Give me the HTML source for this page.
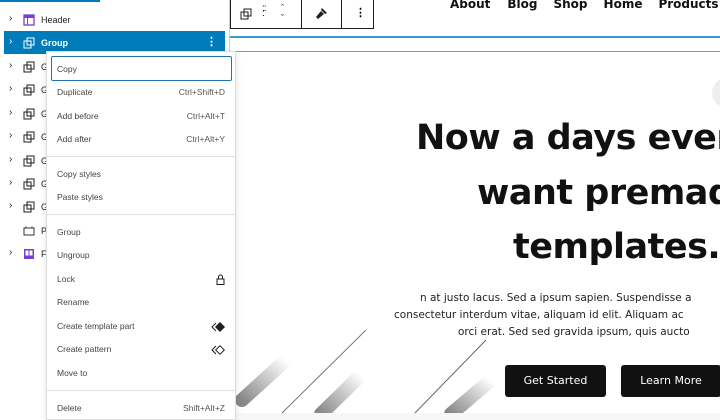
<!DOCTYPE html>
<html><head><style>
*{margin:0;padding:0;box-sizing:border-box}
body{width:720px;height:420px;overflow:hidden;background:#fff;font-family:"Liberation Sans",sans-serif;position:relative}
.abs{position:absolute}
.row{position:absolute;left:0;width:229px;height:23px;font-size:9px;color:#1e1e1e}
.row .chev{position:absolute;left:9px;top:5px;font-size:10px}
.row svg{position:absolute;left:23px;top:6px}
.row .t{position:absolute;left:41px;top:7px}
.menu{position:absolute;left:46px;top:51px;width:190px;height:369px;background:#fff;border:1px solid #ddd;box-shadow:0 2px 6px rgba(0,0,0,.12);font-size:8.5px;color:#444}
.mi{position:absolute;left:10px;right:10px;height:23px;line-height:23px}
.mi span{position:absolute;right:0;top:0;color:#555}
.sep{position:absolute;left:0;right:0;height:1px;background:#e0e0e0}
.poppins{font-family:"DejaVu Sans","Liberation Sans",sans-serif}
</style></head><body>
<div class="abs" style="left:0;top:0;width:100px;height:2px;background:#007cba"></div>
<div class="abs" style="left:229px;top:0;width:1px;height:420px;background:#ccc"></div>
<div class="row" style="top:8px"><span class="chev">›</span>
<svg width="12" height="12" viewBox="0 0 12 12"><rect x="1" y="1" width="10" height="10" fill="none" stroke="#7b3fd0" stroke-width="1.3"/><rect x="1" y="1" width="10" height="3" fill="#7b3fd0"/><line x1="4.5" y1="4" x2="4.5" y2="11" stroke="#7b3fd0"/></svg><span class="t">Header</span></div>
<div class="row" style="top:31px;left:4px;width:221px;background:#007cba;color:#fff"><span class="chev" style="left:5px">›</span>
<svg style="left:19px" width="12" height="12" viewBox="0 0 12 12"><rect x="1" y="4" width="7" height="7" fill="none" stroke="#fff"/><rect x="4" y="1" width="7" height="7" fill="none" stroke="#fff"/></svg><span class="t" style="left:37px;font-weight:bold">Group</span><span class="abs" style="right:8px;top:4px;font-size:11px;font-weight:bold">⋮</span></div>
<div id="groups"></div>
<div class="row" style="top:219px"><svg width="12" height="12" viewBox="0 0 12 12"><rect x="1" y="3" width="10" height="7" fill="none" stroke="#333"/><line x1="3" y1="1.5" x2="3" y2="3" stroke="#333"/><line x1="9" y1="1.5" x2="9" y2="3" stroke="#333"/></svg><span class="t">P</span></div>
<div class="row" style="top:242px"><span class="chev">›</span><svg width="12" height="12" viewBox="0 0 12 12"><rect x="1" y="1" width="10" height="10" fill="#7b3fd0"/><rect x="2.5" y="2.5" width="3" height="5" fill="#fff"/><rect x="6.5" y="2.5" width="3" height="5" fill="#fff"/></svg><span class="t">F</span></div>
<script>
let h='';for(let i=0;i<7;i++){h+='<div class="row" style="top:'+(55+i*23.4)+'px"><span class="chev">›</span><svg width="12" height="12" viewBox="0 0 12 12"><rect x="1" y="4" width="7" height="7" fill="none" stroke="#1e1e1e"/><rect x="4" y="1" width="7" height="7" fill="none" stroke="#1e1e1e"/></svg><span class="t">G</span></div>';}
document.getElementById('groups').innerHTML=h;
</script>
<div class="abs" style="left:230px;top:-1px;width:144px;height:30px;border:1px solid #1e1e1e;background:#fff"></div>
<div class="abs" style="left:301px;top:0;width:1px;height:29px;background:#1e1e1e"></div>
<div class="abs" style="left:341px;top:0;width:1px;height:29px;background:#1e1e1e"></div>
<svg class="abs" style="left:240px;top:8px" width="12" height="12" viewBox="0 0 12 12"><rect x="1" y="4" width="7" height="7" fill="none" stroke="#1e1e1e"/><rect x="4" y="1" width="7" height="7" fill="none" stroke="#1e1e1e"/></svg>
<div class="abs" style="left:262px;top:6px;font-size:10px;letter-spacing:-1px;line-height:5px">::<br>:</div>
<div class="abs" style="left:281px;top:3px;font-size:9px;line-height:10px">ˆ<br>ˇ</div>
<svg class="abs" style="left:315px;top:7px" width="13" height="13" viewBox="0 0 13 13"><path d="M7 1l5 5-2 1-4-4z M6 4l3 3-6 5-2-2z" fill="#1e1e1e"/></svg>
<div class="abs" style="left:355px;top:6px;font-size:11px;font-weight:bold">⋮</div>
<div class="abs poppins" style="left:450px;top:-3px;font-size:12px;font-weight:bold;color:#111;white-space:nowrap">About<span style="margin-left:17px">Blog</span><span style="margin-left:16px">Shop</span><span style="margin-left:16px">Home</span><span style="margin-left:16px">Products</span></div>
<div class="abs" style="left:230px;top:36px;width:490px;height:2px;background:#3a9bd2"></div>
<div class="abs" style="left:235px;top:51px;width:485px;height:1px;background:#5aaede"></div>
<div class="abs" style="left:235px;top:51px;width:1px;height:369px;background:#ddd"></div>
<div class="abs" style="left:712px;top:78px;width:30px;height:30px;border-radius:50%;background:#eee"></div>
<div class="abs poppins" style="left:416px;top:118px;font-size:35px;font-weight:bold;color:#111;white-space:nowrap;letter-spacing:-.5px">Now a days every</div>
<div class="abs poppins" style="left:477px;top:173px;font-size:35px;font-weight:bold;color:#111;white-space:nowrap;letter-spacing:-.5px">want premade</div>
<div class="abs poppins" style="left:513px;top:227px;font-size:35px;font-weight:bold;color:#111;white-space:nowrap;letter-spacing:-.5px">templates.</div>
<div class="abs poppins" style="left:420px;top:290px;font-size:10.5px;color:#222;white-space:nowrap;line-height:17px">n at justo lacus. Sed a ipsum sapien. Suspendisse a</div>
<div class="abs poppins" style="left:394px;top:307px;font-size:10.5px;color:#222;white-space:nowrap;line-height:17px">consectetur interdum vitae, aliquam id elit. Aliquam ac</div>
<div class="abs poppins" style="left:458px;top:324px;font-size:10.5px;color:#222;white-space:nowrap;line-height:17px">orci erat. Sed sed gravida ipsum, quis aucto</div>
<svg class="abs" style="left:236px;top:300px" width="260" height="114" viewBox="0 0 260 114">
<defs><linearGradient id="g" x1="0" y1="1" x2="1" y2="0"><stop offset="0" stop-color="#888"/><stop offset="1" stop-color="#fff"/></linearGradient></defs>
<line x1="6" y1="100" x2="50" y2="60" stroke="url(#g)" stroke-width="14" stroke-linecap="round"/>
<line x1="45" y1="114" x2="130" y2="30" stroke="#777" stroke-width="1"/>
<line x1="85" y1="114" x2="125" y2="75" stroke="url(#g)" stroke-width="14" stroke-linecap="round"/>
<line x1="178" y1="114" x2="250" y2="40" stroke="#666" stroke-width="1"/>
<line x1="215" y1="114" x2="255" y2="80" stroke="url(#g)" stroke-width="14" stroke-linecap="round"/>
</svg>
<div class="abs" style="left:236px;top:413px;width:484px;height:7px;background:#f7f7f7"></div>
<div class="abs poppins" style="left:505px;top:365px;width:101px;height:32px;background:#111;border-radius:3px;color:#fff;font-size:11px;text-align:center;line-height:32px">Get Started</div>
<div class="abs poppins" style="left:621px;top:365px;width:100px;height:32px;background:#111;border-radius:3px;color:#fff;font-size:11px;text-align:center;line-height:32px">Learn More</div>
<div class="menu">
<div class="abs" style="left:4px;top:4px;width:181px;height:25px;border:1.5px solid #2271b1;border-radius:2px"></div>
<div class="mi" style="top:6px">Copy</div>
<div class="mi" style="top:29px">Duplicate<span>Ctrl+Shift+D</span></div>
<div class="mi" style="top:53px">Add before<span>Ctrl+Alt+T</span></div>
<div class="mi" style="top:76px">Add after<span>Ctrl+Alt+Y</span></div>
<div class="sep" style="top:104px"></div>
<div class="mi" style="top:111px">Copy styles</div>
<div class="mi" style="top:134px">Paste styles</div>
<div class="sep" style="top:162px"></div>
<div class="mi" style="top:169px">Group</div>
<div class="mi" style="top:192px">Ungroup</div>
<div class="mi" style="top:216px">Lock<span><svg width="9" height="11" viewBox="0 0 9 11" style="margin-top:6px"><rect x="1" y="5" width="7" height="5.5" fill="none" stroke="#1e1e1e"/><path d="M2.5 5V3a2 2 0 014 0v2" fill="none" stroke="#1e1e1e"/></svg></span></div>
<div class="mi" style="top:239px">Rename</div>
<div class="mi" style="top:263px">Create template part<span><svg width="14" height="10" viewBox="0 0 14 10" style="margin-top:7px"><path d="M9 0l5 5-5 5-5-5z" fill="#1e1e1e"/><path d="M5 1L1 5l4 4" fill="none" stroke="#1e1e1e"/></svg></span></div>
<div class="mi" style="top:286px">Create pattern<span><svg width="14" height="10" viewBox="0 0 14 10" style="margin-top:7px"><path d="M9 .7l4.3 4.3-4.3 4.3-4.3-4.3z" fill="none" stroke="#1e1e1e"/><path d="M5 1L1 5l4 4" fill="none" stroke="#1e1e1e"/></svg></span></div>
<div class="mi" style="top:310px">Move to</div>
<div class="sep" style="top:338px"></div>
<div class="mi" style="top:345px">Delete<span>Shift+Alt+Z</span></div>
</div>
</body></html>
